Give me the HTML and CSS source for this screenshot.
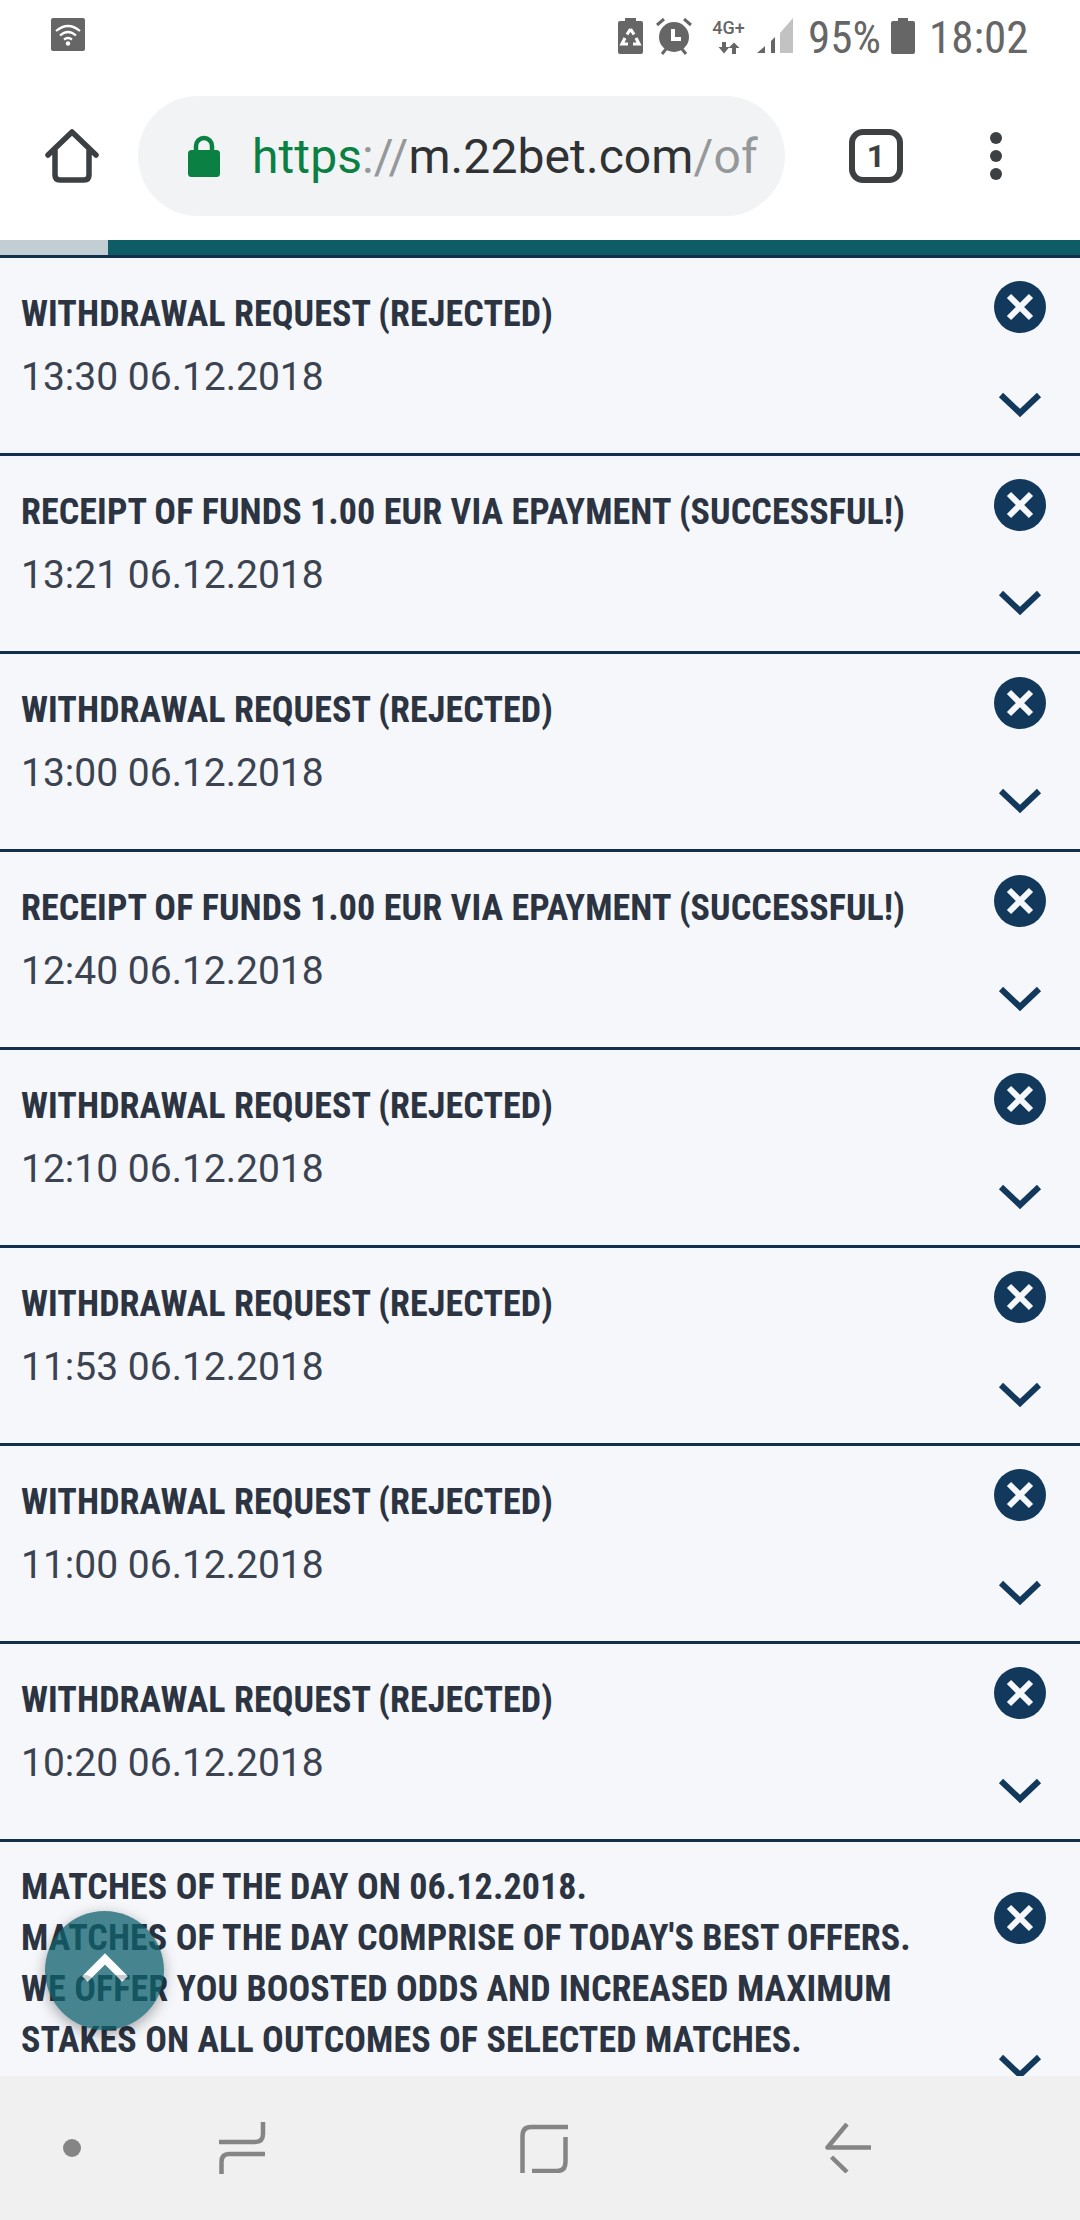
FILE: index.html
```html
<!DOCTYPE html>
<html lang="en">
<head>
    <meta charset="UTF-8">
    <meta name="viewport" content="width=device-width, initial-scale=1.0">
    <title>Notifications</title>
    <link rel="stylesheet" href="styles.css">
</head>
<body>
    <svg class="sprite" width="0" height="0">
        <symbol id="icon-close" viewBox="0 0 52 52">
            <circle cx="26" cy="26" r="26" fill="#12395b"/>
            <path d="M15 15L37 37M37 15L15 37" stroke="#f5f7fb" stroke-width="6" fill="none"/>
        </symbol>
        <symbol id="icon-chevron" viewBox="0 0 44 26">
            <path d="M3 3L22 21L41 3" stroke="#12395b" stroke-width="6" fill="none"/>
        </symbol>
    </svg>

    <div class="status-bar">
        <div class="wifi-badge">
            <svg width="34" height="33" viewBox="0 0 34 33">
                <path d="M5 13Q17 3 29 13M9 17.500Q17 10.500 25 17.500M13 21.500Q17 18.500 21 21.500" stroke="#fff" stroke-width="2.200" fill="none"/>
                <circle cx="17" cy="25.500" r="2.200" fill="#fff"/>
            </svg>
        </div>
        <div class="status-right">
            <svg class="s-recycle" width="25" height="36" viewBox="0 0 25 36">
                <path d="M7 0H18V3H23Q25 3 25 5V34Q25 36 23 36H2Q0 36 0 34V5Q0 3 2 3H7Z" fill="#666"/>
                <path d="M12.500 11L16 16.500M12.500 11L9 16.500M7 20L4 26H10M18 20L21 26H15" stroke="#fff" stroke-width="3.200" fill="none"/>
            </svg>
            <svg class="s-alarm" width="36" height="37" viewBox="0 0 36 37">
                <circle cx="18" cy="19" r="15" fill="#666"/>
                <path d="M1 7L8 1M35 7L28 1M6 36L10 31M30 36L26 31" stroke="#666" stroke-width="3" fill="none"/>
                <path d="M17 11V21H25" stroke="#fff" stroke-width="4" fill="none"/>
            </svg>
            <div class="s-network">
                <span class="s-4g">4G+</span>
                <svg class="s-arrows" width="22" height="12" viewBox="0 0 22 12">
                    <path d="M4 0H8V5H11.500L6 11.500L0.500 5H4Z" fill="#666"/>
                    <path d="M14 12V6H10.500L16 0.500L21.500 6H18V12Z" fill="#666"/>
                </svg>
            </div>
            <svg class="s-signal" width="36" height="35" viewBox="0 0 36 35">
                <path d="M0 35L8 28V35Z" fill="#666"/>
                <path d="M14 35V23L18 19V35Z" fill="#666"/>
                <path d="M23 35V15L36 0V35Z" fill="#c2c2c2"/>
            </svg>
            <span class="s-text s-percent">95%</span>
            <svg class="s-battery" width="24" height="36" viewBox="0 0 24 36">
                <path d="M7 0H17V3H22Q24 3 24 5V34Q24 36 22 36H2Q0 36 0 34V5Q0 3 2 3H7Z" fill="#666"/>
            </svg>
            <span class="s-text s-time">18:02</span>
        </div>
    </div>

    <div class="toolbar">
        <svg class="home-icon" width="54" height="54" viewBox="0 0 54 54">
            <path d="M3 26L27 3L51 26M10 21V46Q10 51 15 51H39Q44 51 44 46V21" stroke="#3c4043" stroke-width="5.500" stroke-linecap="round" stroke-linejoin="round" fill="none"/>
        </svg>
        <div class="url-pill">
            <svg class="lock-icon" width="32" height="42" viewBox="0 0 32 42">
                <path d="M8 16V11A8 8 0 0 1 24 11V16" stroke="#0b8043" stroke-width="4.500" fill="none"/>
                <rect x="0" y="15" width="32" height="27" rx="3.500" fill="#0b8043"/>
            </svg>
            <div class="url-text"><span class="url-https">https</span><span class="url-dim">://</span>m.22bet.com<span class="url-dim">/of</span></div>
        </div>
        <div class="tab-count">1</div>
        <div class="menu-dots"><i></i><i></i><i></i></div>
    </div>

    <div class="progress"><div class="progress-done"></div></div>

    <main class="list">
        <article class="item">
            <div class="item-body">
                <h3 class="item-title">WITHDRAWAL REQUEST (REJECTED)</h3>
                <p class="item-date">13:30 06.12.2018</p>
            </div>
            <div class="item-actions">
                <svg class="btn-close"><use href="#icon-close"/></svg>
                <svg class="btn-more"><use href="#icon-chevron"/></svg>
            </div>
        </article>
        <article class="item">
            <div class="item-body">
                <h3 class="item-title">RECEIPT OF FUNDS 1.00 EUR VIA EPAYMENT (SUCCESSFUL!)</h3>
                <p class="item-date">13:21 06.12.2018</p>
            </div>
            <div class="item-actions">
                <svg class="btn-close"><use href="#icon-close"/></svg>
                <svg class="btn-more"><use href="#icon-chevron"/></svg>
            </div>
        </article>
        <article class="item">
            <div class="item-body">
                <h3 class="item-title">WITHDRAWAL REQUEST (REJECTED)</h3>
                <p class="item-date">13:00 06.12.2018</p>
            </div>
            <div class="item-actions">
                <svg class="btn-close"><use href="#icon-close"/></svg>
                <svg class="btn-more"><use href="#icon-chevron"/></svg>
            </div>
        </article>
        <article class="item">
            <div class="item-body">
                <h3 class="item-title">RECEIPT OF FUNDS 1.00 EUR VIA EPAYMENT (SUCCESSFUL!)</h3>
                <p class="item-date">12:40 06.12.2018</p>
            </div>
            <div class="item-actions">
                <svg class="btn-close"><use href="#icon-close"/></svg>
                <svg class="btn-more"><use href="#icon-chevron"/></svg>
            </div>
        </article>
        <article class="item">
            <div class="item-body">
                <h3 class="item-title">WITHDRAWAL REQUEST (REJECTED)</h3>
                <p class="item-date">12:10 06.12.2018</p>
            </div>
            <div class="item-actions">
                <svg class="btn-close"><use href="#icon-close"/></svg>
                <svg class="btn-more"><use href="#icon-chevron"/></svg>
            </div>
        </article>
        <article class="item">
            <div class="item-body">
                <h3 class="item-title">WITHDRAWAL REQUEST (REJECTED)</h3>
                <p class="item-date">11:53 06.12.2018</p>
            </div>
            <div class="item-actions">
                <svg class="btn-close"><use href="#icon-close"/></svg>
                <svg class="btn-more"><use href="#icon-chevron"/></svg>
            </div>
        </article>
        <article class="item">
            <div class="item-body">
                <h3 class="item-title">WITHDRAWAL REQUEST (REJECTED)</h3>
                <p class="item-date">11:00 06.12.2018</p>
            </div>
            <div class="item-actions">
                <svg class="btn-close"><use href="#icon-close"/></svg>
                <svg class="btn-more"><use href="#icon-chevron"/></svg>
            </div>
        </article>
        <article class="item">
            <div class="item-body">
                <h3 class="item-title">WITHDRAWAL REQUEST (REJECTED)</h3>
                <p class="item-date">10:20 06.12.2018</p>
            </div>
            <div class="item-actions">
                <svg class="btn-close"><use href="#icon-close"/></svg>
                <svg class="btn-more"><use href="#icon-chevron"/></svg>
            </div>
        </article>
        <article class="item item-long">
            <div class="item-body">
                <h3 class="item-title">MATCHES OF THE DAY ON 06.12.2018.<br>MATCHES OF THE DAY COMPRISE OF TODAY'S BEST OFFERS.<br>WE OFFER YOU BOOSTED ODDS AND INCREASED MAXIMUM<br>STAKES ON ALL OUTCOMES OF SELECTED MATCHES.</h3>
                <p class="item-date">00:00 06.12.2018</p>
            </div>
            <div class="item-actions">
                <svg class="btn-close"><use href="#icon-close"/></svg>
                <svg class="btn-more"><use href="#icon-chevron"/></svg>
            </div>
        </article>
    </main>

    <div class="fab">
        <svg width="50" height="34" viewBox="0 0 50 34">
            <path d="M5 27L25 7L45 27" stroke="#fff" stroke-width="8" fill="none"/>
        </svg>
    </div>

    <nav class="nav-bar">
        <div class="nav-dot"></div>
        <svg class="nav-recents" width="48" height="52" viewBox="0 0 48 52">
            <path d="M0 20H36Q44 20 44 12V0" stroke="#858585" stroke-width="4.500" fill="none"/>
            <path d="M46 32H10Q2.500 32 2.500 40V52" stroke="#858585" stroke-width="4.500" fill="none"/>
        </svg>
        <svg class="nav-home" width="48" height="49" viewBox="0 0 48 49">
            <path d="M2.500 49V12Q2.500 3 11 3H48" stroke="#858585" stroke-width="4.500" fill="none"/>
            <path d="M45.500 13V38Q45.500 47 37 47H12" stroke="#858585" stroke-width="4.500" fill="none"/>
        </svg>
        <svg class="nav-back" width="46" height="50" viewBox="0 0 46 50">
            <path d="M22 1L2.500 24.500L46 24.500" stroke="#858585" stroke-width="4.500" stroke-linejoin="round" fill="none"/>
            <path d="M6.500 34L22 49" stroke="#858585" stroke-width="4.500" fill="none"/>
        </svg>
    </nav>
</body>
</html>
```

FILE: styles.css
```css
html, body {
    margin: 0;
    padding: 0;
}
body {
    position: relative;
    width: 1080px;
    height: 2220px;
    overflow: hidden;
    display: flex;
    flex-direction: column;
    background-color: #fff;
    font-family: Roboto, "Liberation Sans", sans-serif;
}
.sprite {
    position: absolute;
}

/* status bar */
.status-bar {
    height: 72px;
    flex: none;
    display: flex;
    justify-content: space-between;
    padding: 18px 55px 0 51px;
    box-sizing: border-box;
}
.wifi-badge {
    width: 34px;
    height: 33px;
    background-color: #666;
    border-radius: 2px;
}
.status-right {
    display: flex;
    align-items: flex-start;
    color: #666;
}
.s-alarm {
    margin-left: 13px;
}
.s-network {
    margin-left: 18px;
    width: 37px;
    display: flex;
    flex-direction: column;
    align-items: center;
}
.s-4g {
    font-size: 18px;
    font-weight: 500;
    line-height: 20px;
}
.s-arrows {
    margin-top: 4px;
}
.s-signal {
    margin-left: 10px;
}
.s-text {
    font-size: 45px;
    font-stretch: condensed;
    line-height: 40px;
}
.s-percent {
    margin-left: 15px;
    width: 70px;
}
.s-battery {
    margin-left: 13px;
}
.s-time {
    margin-left: 14px;
    width: 96px;
}

/* browser toolbar */
.toolbar {
    height: 168px;
    flex: none;
    display: flex;
    align-items: center;
}
.home-icon {
    margin-left: 45px;
}
.url-pill {
    margin-left: 39px;
    width: 647px;
    height: 120px;
    border-radius: 60px;
    background-color: #f1f3f4;
    display: flex;
    align-items: center;
    overflow: hidden;
}
.lock-icon {
    margin-left: 50px;
    flex: none;
}
.url-text {
    margin-left: 32px;
    font-size: 48px;
    letter-spacing: 0.1px;
    white-space: nowrap;
    color: #2f3133;
}
.url-https {
    color: #0b8043;
}
.url-dim {
    color: #95989a;
}
.tab-count {
    margin-left: 64px;
    width: 54px;
    height: 54px;
    box-sizing: border-box;
    border: 6px solid #3c4043;
    border-radius: 14px;
    color: #3c4043;
    font-size: 32px;
    font-weight: 700;
    line-height: 42px;
    text-align: center;
}
.menu-dots {
    margin-left: 87px;
    display: flex;
    flex-direction: column;
    gap: 6px;
}
.menu-dots i {
    display: block;
    width: 12px;
    height: 12px;
    border-radius: 50%;
    background-color: #3c4043;
}

/* page load progress */
.progress {
    height: 15px;
    flex: none;
    background-color: #0d5c66;
    border-bottom: 3px solid #12304d;
}
.progress-done {
    width: 108px;
    height: 100%;
    background-color: #c2ced4;
}

/* notifications */
.list {
    flex: 1;
    min-height: 0;
    overflow: hidden;
    background-color: #f5f7fb;
}
.item {
    height: 195px;
    display: flex;
    justify-content: space-between;
    border-bottom: 3px solid #12304d;
}
.item-body {
    padding: 31px 0 0 21px;
}
.item-title {
    margin: 0;
    font-family: "Roboto Condensed", Roboto, sans-serif;
    font-stretch: condensed;
    font-size: 36px;
    font-weight: 700;
    letter-spacing: 0.08px;
    line-height: 51px;
    color: #2c3442;
}
.item-date {
    margin: 12px 0 0;
    font-size: 39px;
    line-height: 51px;
    color: #3b4351;
}
.item-actions {
    width: 120px;
    flex: none;
    display: flex;
    flex-direction: column;
    align-items: center;
    padding-top: 23px;
}
.btn-close {
    width: 52px;
    height: 52px;
}
.btn-more {
    margin-top: 59px;
    width: 44px;
    height: 26px;
}
.item-long {
    height: auto;
    border-bottom: none;
}
.item-long .item-body {
    padding-top: 20px;
}
.item-long .item-date {
    margin-top: 0;
}
.item-long .item-actions {
    padding-top: 50px;
}
.item-long .btn-more {
    margin-top: 110px;
}

/* scroll-to-top button */
.fab {
    position: absolute;
    left: 45px;
    top: 1911px;
    width: 119px;
    height: 119px;
    border-radius: 50%;
    background-color: #0c606b;
    opacity: 0.75;
    box-shadow: 0 4px 14px rgba(0, 0, 0, 0.45);
    display: flex;
    justify-content: center;
    padding-top: 41px;
    box-sizing: border-box;
}

/* android nav bar */
.nav-bar {
    height: 144px;
    flex: none;
    display: flex;
    align-items: center;
    background-color: #f0f0f0;
}
.nav-dot {
    margin-left: 63px;
    width: 18px;
    height: 18px;
    border-radius: 50%;
    background-color: #858585;
}
.nav-recents {
    margin-left: 138px;
}
.nav-home {
    margin-left: 253px;
}
.nav-back {
    margin-left: 257px;
}
```
